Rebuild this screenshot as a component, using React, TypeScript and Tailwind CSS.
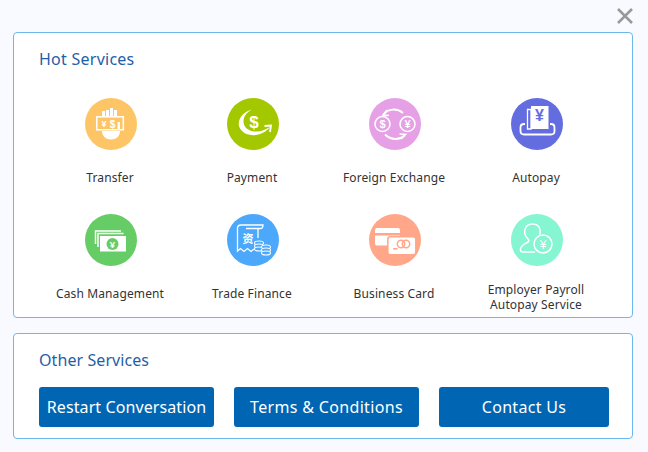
import React from "react";

const W = "#fff";
const font = { fontFamily: "'Noto Sans', sans-serif" };

function Circle({ color, children }: { color: string; children: React.ReactNode }) {
  return (
    <svg width="52" height="52" viewBox="0 0 52 52" className="ml-[1px]">
      <circle cx="26" cy="26" r="26" fill={color} />
      {children}
    </svg>
  );
}

const Sym = ({ x, y, s, t, fill = W, w = 700 }: { x: number; y: number; s: number; t: string; fill?: string; w?: number }) => (
  <text x={x} y={y} fontSize={s} fontWeight={w} fill={fill} textAnchor="middle" fontFamily="'Liberation Sans', sans-serif">{t}</text>
);

const icons: Record<string, React.ReactNode> = {
  transfer: (
    <Circle color="#fec567">
      <path d="M17 18v-5h3v5zM21 18v-6h3v6zM25 18v-8h3v8zM29 18v-6h3v6z" fill={W} />
      <rect x="11.800" y="18.800" width="26.500" height="13" fill="none" stroke={W} strokeWidth="1.500" />
      <Sym x={19} y={29} s={9} t="¥" />
      <Sym x={27.500} y={29.500} s={10} t="$" />
      <rect x="32.500" y="24" width="2.500" height="8" fill={W} />
      <path d="M17 33h18c0 5-4 8.500-9 8.500s-9-3.500-9-8.500z" fill={W} />
    </Circle>
  ),
  payment: (
    <Circle color="#a3c800">
      <path d="M25 11.500C16 14 10.500 21 12 28c2 7 10 10 17 9 6-1 11-4 14-8-5 3-10 5-15 4.500-7-.5-11.500-4.500-11.500-10 0-5.500 3.500-9.500 8.500-12z" fill={W} />
      <path d="M37.500 28l6.500-.5-1 6.500" fill="none" stroke={W} strokeWidth="1.800" />
      <Sym x={27} y={30} s={17} t="$" />
    </Circle>
  ),
  fx: (
    <Circle color="#e5a0e6">
      <g fill="none" stroke={W} strokeWidth="1.600">
        <circle cx="13.500" cy="26" r="7.500" />
        <circle cx="38.500" cy="26" r="7.500" />
        <path d="M14.500 16.500C19 10.500 28 10 34 15" strokeWidth="2" />
        <path d="M16 36.500C22 42.500 31 42 36 37" strokeWidth="2" />
        <path d="M18 12l-4 5 6 .5M32 41l4.500-4.500-6-.5" strokeWidth="1.600" />
      </g>
      <Sym x={13.500} y={30} s={11} t="$" />
      <Sym x={38.500} y={30} s={11} t="¥" />
    </Circle>
  ),
  autopay: (
    <Circle color="#636de0">
      <path d="M20 11.500h-3.500V31H20z" fill="none" stroke={W} strokeWidth="1.300" />
      <rect x="20" y="8" width="17.500" height="23" fill={W} />
      <Sym x={28.500} y={23} s={16} t="¥" fill="#636de0" />
      <path d="M14 26h-1c-2 0-3.500 1.500-3.500 3.500v3.500c0 2 1.500 3.500 3.500 3.500h27c2 0 3.500-1.500 3.500-3.500v-3.500c0-2-1.500-3.500-3.500-3.500h-1" fill="none" stroke={W} strokeWidth="1.800" />
    </Circle>
  ),
  cash: (
    <Circle color="#66cc66">
      <path d="M36 17H10.500v13M38.500 19.500H13V33" fill="none" stroke={W} strokeWidth="1.500" />
      <rect x="15" y="22" width="26" height="15.500" fill={W} />
      <circle cx="27.500" cy="30" r="6" fill="#66cc66" />
      <Sym x={27.500} y={33.500} s={9.500} t="¥" />
    </Circle>
  ),
  trade: (
    <Circle color="#4ba8fa">
      <path d="M14 11h22c0 2-1 3.500-2.500 3.500H19" fill="none" stroke={W} strokeWidth="1.300" />
      <path d="M14 11c-2 0-3.500 1.500-3.500 3.500V37l3-2.500 3.500 3 3.500-3 3.500 3 3-2.500M31 14.500V24" fill="none" stroke={W} strokeWidth="1.300" />
      <text x="21" y="29" fontSize="11" fontWeight="700" fill={W} textAnchor="middle" fontFamily="'Noto Sans CJK SC', sans-serif">资</text>
      <g fill="#4ba8fa" stroke={W} strokeWidth="1.100">
        <ellipse cx="32" cy="29" rx="4.500" ry="2" />
        <ellipse cx="32" cy="32" rx="4.500" ry="2" />
        <ellipse cx="32" cy="35" rx="4.500" ry="2" />
        <ellipse cx="39" cy="33" rx="4.500" ry="2" />
        <ellipse cx="39" cy="36" rx="4.500" ry="2" />
        <ellipse cx="39" cy="39" rx="4.500" ry="2" />
      </g>
    </Circle>
  ),
  card: (
    <Circle color="#ffa788">
      <rect x="6" y="14" width="25" height="17.500" rx="2" fill={W} />
      <rect x="6" y="19" width="25" height="2.500" fill="#ffa788" />
      <rect x="18.800" y="22.800" width="28" height="18" rx="2.500" fill={W} stroke="#ffa788" strokeWidth="1.500" />
      <rect x="24" y="34" width="4.500" height="1.500" fill="#ffa788" />
      <circle cx="32" cy="30" r="3.700" fill="none" stroke="#ffa788" strokeWidth="1.500" />
      <circle cx="37" cy="30" r="3.700" fill="none" stroke="#ffa788" strokeWidth="1.500" />
    </Circle>
  ),
  employer: (
    <Circle color="#85f5d2">
      <path d="M24 38H12c-2 0-3-1.500-2.500-3.500 1-3 4.500-5 7.500-6.500 1-.5 1-2 0-3-2.500-2.500-4-6-3-9.500 1-4 4.500-5.500 7.500-5.500s6.500 1.500 7.500 5.500c.4 2 .1 4-.5 6" fill="none" stroke={W} strokeWidth="1.500" />
      <circle cx="32" cy="30" r="9" fill="#85f5d2" stroke={W} strokeWidth="1.500" />
      <Sym x={32} y={34.500} s={12} t="¥" w={400} />
    </Circle>
  ),
};

const items = [
  { k: "transfer", l: "Transfer" },
  { k: "payment", l: "Payment" },
  { k: "fx", l: "Foreign Exchange" },
  { k: "autopay", l: "Autopay" },
  { k: "cash", l: "Cash Management" },
  { k: "trade", l: "Trade Finance" },
  { k: "card", l: "Business Card" },
  { k: "employer", l: "Employer Payroll Autopay Service" },
];

const buttons = [
  { t: "Restart Conversation", c: "w-[175px] tracking-[0.1px]" },
  { t: "Terms & Conditions", c: "w-[185px] tracking-[0.33px]" },
  { t: "Contact Us", c: "w-[170px] tracking-[0.3px]" },
];

export default function App() {
  return (
    <div className="h-[452px] w-[648px] overflow-hidden bg-[#f8faff] pl-[13px] pr-[15px] text-[#333]" style={font}>
      <div className="flex h-[32px] items-start justify-end">
        <svg width="18" height="18" viewBox="0 0 18 18" className="mt-[7px] -mr-[1px]">
          <path d="M2 2l14 14M16 2L2 16" stroke="#999" strokeWidth="2.600" fill="none" />
        </svg>
      </div>
      <section className="h-[286px] rounded-[4px] border border-[#6cb8ec] bg-white px-[25px] pt-[14px]">
        <h2 className="text-[16px] leading-[24px] tracking-[0.25px] text-[#1f5fa8]">Hot Services</h2>
        <div className="mt-[27px] grid grid-cols-4 auto-rows-[116px]">
          {items.map((it) => (
            <div key={it.k} className="flex flex-col items-center">
              {icons[it.k]}
              <div className={`${it.k === "employer" ? "mt-[16px] w-[110px]" : "mt-[20px]"} text-center text-[12px] leading-[15px] tracking-[0.12px]`}>
                {it.l}
              </div>
            </div>
          ))}
        </div>
      </section>
      <section className="mt-[15px] h-[106px] rounded-[4px] border border-[#6cb8ec] bg-white px-[25px] pt-[14px]">
        <h2 className="text-[16px] leading-[24px] tracking-[0.08px] text-[#1f5fa8]">Other Services</h2>
        <div className="mt-[15px] flex gap-[20px]">
          {buttons.map((b) => (
            <button key={b.t} className={`${b.c} h-[40px] shrink-0 rounded-[3px] bg-[#0066b3] text-[16px] text-white`}>
              {b.t}
            </button>
          ))}
        </div>
      </section>
    </div>
  );
}
